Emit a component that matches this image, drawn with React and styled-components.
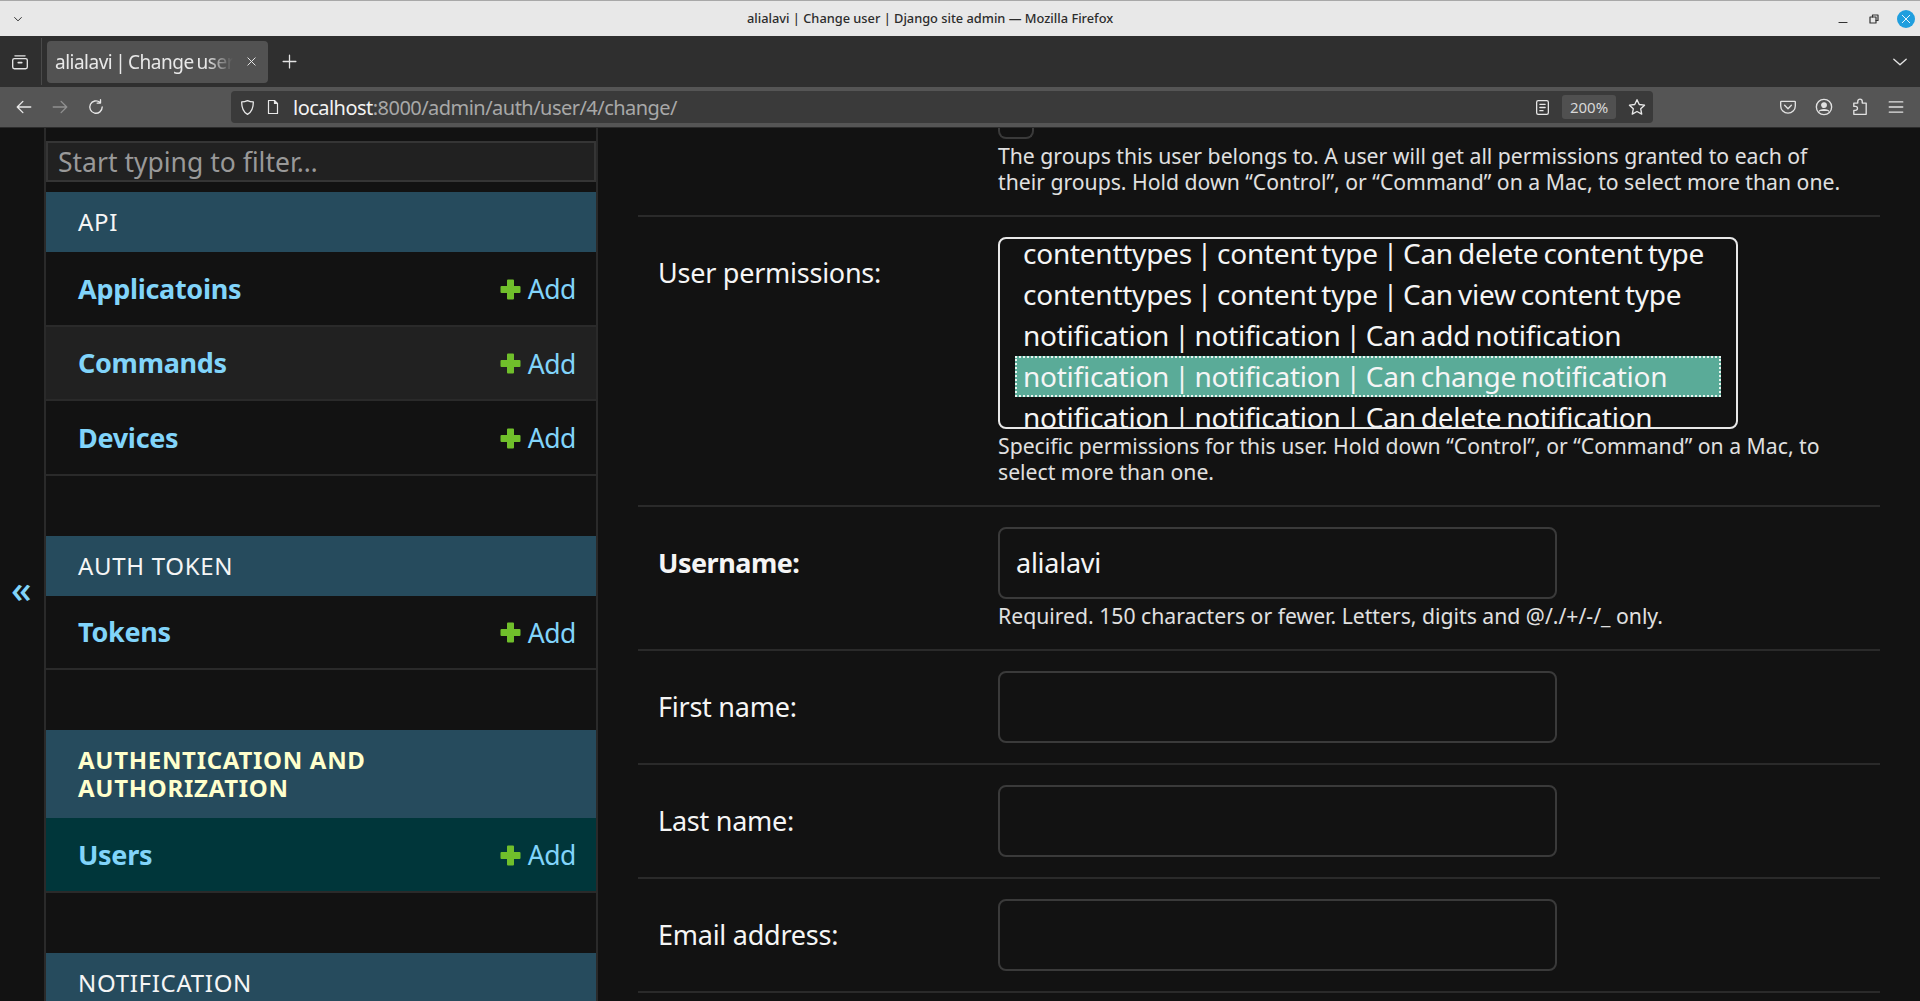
import React from "react";
import styled, { createGlobalStyle } from "styled-components";

const GlobalStyle = createGlobalStyle`
  html, body {
    margin: 0;
    height: 100%;
    overflow: hidden;
    background: #121212;
  }
  body {
    font-family: "Noto Sans", "Open Sans", sans-serif;
  }
  * {
    box-sizing: border-box;
  }
`;

const Page = styled.div`
  height: 1001px;
  display: flex;
  flex-direction: column;
  overflow: hidden;
`;

/* browser chrome */
const TitleBar = styled.div`
  height: 36px;
  flex: none;
  display: grid;
  grid-template-columns: 735px auto 1fr;
  align-items: center;
  background: #e8e8e8;
  border-top: 1px solid #a8a8a8;
  color: #2c2c2c;
  padding: 0 5px 0 12px;
`;

const WindowTitle = styled.div`
  font-size: 12.8px;
  font-weight: 500;
  padding-bottom: 1px;
`;

const WindowButtons = styled.div`
  display: flex;
  justify-content: flex-end;
  align-items: center;
  gap: 15px;
  color: #333;
`;

const CloseCircle = styled.div`
  width: 18px;
  height: 18px;
  border-radius: 50%;
  background: #1f9ede;
  color: #fff;
  display: flex;
  align-items: center;
  justify-content: center;
`;

const TabBar = styled.div`
  height: 51px;
  flex: none;
  display: flex;
  align-items: center;
  background: #2f2f2f;
  color: #e4e4e4;
  padding: 0 11px 0 11px;
`;

const ViewButton = styled.div`
  width: 31px;
  height: 47px;
  display: flex;
  align-items: center;
  border-right: 1px solid #4a4a4a;
`;

const Tab = styled.div`
  width: 221px;
  height: 42px;
  margin-left: 5px;
  border-radius: 4px;
  background: #525252;
  display: flex;
  align-items: center;
  justify-content: space-between;
  padding: 0 10px 0 8px;
  font-size: 19px;
  color: #e8e8e8;
`;

const TabTitle = styled.span`
  width: 178px;
  overflow: hidden;
  white-space: nowrap;
  letter-spacing: -0.5px;
  word-spacing: -1.5px;
  mask-image: linear-gradient(to right, #000 85%, transparent);
`;

const NewTab = styled.div`
  margin-left: 13px;
  display: flex;
  flex: 1;
`;

const NavBar = styled.div`
  height: 41px;
  flex: none;
  display: flex;
  align-items: center;
  background: #555;
  border-bottom: 1px solid #2c2c2c;
  color: #e8e8e8;
  padding: 0 15px 0 15px;
`;

const NavButtons = styled.div`
  display: flex;
  gap: 18px;
  width: 216px;
`;

const UrlBar = styled.div`
  width: 1422px;
  height: 32px;
  border-radius: 4px;
  background: #3a3a3a;
  display: flex;
  align-items: center;
  padding: 0 7px 0 8px;
  gap: 9px;
`;

const UrlText = styled.div`
  flex: 1;
  font-size: 20px;
  color: #a8a8a8;
  letter-spacing: -0.53px;
  margin-left: 3px;
`;

const UrlHost = styled.span`
  color: #f2f2f2;
`;

const ZoomPill = styled.div`
  width: 54px;
  height: 24px;
  border-radius: 3px;
  background: #505050;
  color: #d8d8d8;
  font-size: 15px;
  display: flex;
  align-items: center;
  justify-content: center;
  margin: 0 3px 0 2px;
`;

const NavTools = styled.div`
  flex: 1;
  display: flex;
  justify-content: flex-end;
  align-items: center;
  gap: 18px;
  color: #e2e2e2;
`;

/* admin page */
const Body = styled.div`
  flex: 1;
  min-height: 0;
  display: flex;
  background: #121212;
`;

const ToggleColumn = styled.div`
  width: 46px;
  flex: none;
  display: flex;
  align-items: center;
  padding-left: 11px;
  padding-top: 46px;
  border-right: 2px solid #2a2a2a;
  color: #81d4fa;
  font-size: 38px;
  font-weight: 500;
  line-height: 1;
`;

const Sidebar = styled.nav`
  width: 552px;
  flex: none;
  padding-top: 13px;
  border-right: 2px solid #2a2a2a;
  overflow: hidden;
`;

const Filter = styled.div`
  height: 41px;
  margin-bottom: 10px;
  background: #212121;
  border: 2px solid #353535;
  color: #999;
  font-size: 26.5px;
  line-height: 38px;
  padding-left: 10px;
`;

const Section = styled.section`
  margin-bottom: 60px;
`;

const Caption = styled.div`
  background: #264b5d;
  padding: 16px 32px;
  font-size: 24px;
  line-height: 28px;
  letter-spacing: 0.7px;
  color: ${(p) => (p.$current ? "#ffffcc" : "#f5f5f5")};
  font-weight: ${(p) => (p.$current ? 700 : 400)};
`;

const ModelRow = styled.div`
  height: 74.5px;
  display: flex;
  align-items: center;
  justify-content: space-between;
  padding: 0 20px 0 32px;
  border-bottom: 2px solid #2a2a2a;
  background: ${(p) => (p.$current ? "#00363a" : p.$hover ? "#212121" : "transparent")};
  color: #81d4fa;
`;

const ModelName = styled.span`
  font-size: 27px;
  font-weight: 700;
  letter-spacing: -0.3px;
`;

const AddLink = styled.span`
  display: flex;
  align-items: center;
  gap: 7px;
  font-size: 26.5px;
  line-height: 36px;
  padding-top: 2px;
  letter-spacing: -0.4px;
`;

const Main = styled.main`
  width: 1242px;
  margin-left: 40px;
  flex: none;
`;

const FormRow = styled.div`
  display: flex;
  padding: ${(p) => (p.$scrolled ? 0 : 20)}px 0 20px 20px;
  border-bottom: 2px solid #2a2a2a;
`;

const FieldLabel = styled.label`
  width: 340px;
  flex: none;
  font-size: 27px;
  line-height: 72px;
  color: #f5f5f5;
  font-weight: ${(p) => (p.$required ? 700 : 400)};
  letter-spacing: ${(p) => (p.$required ? -0.5 : -0.25)}px;
`;

const Field = styled.div`
  flex: 1;
  min-width: 0;
`;

const GroupsStub = styled.div`
  width: 36px;
  height: 11px;
  border: 2px solid #3a3a3a;
  border-top: none;
  border-radius: 0 0 8px 8px;
`;

const Help = styled.div`
  margin-top: 4px;
  font-size: 21.2px;
  line-height: 26px;
  color: #e0e0e0;
  width: 860px;
`;

const MultiSelect = styled.div`
  width: 740px;
  height: 192px;
  border: 2px solid #e8e8e8;
  border-radius: 8px;
  padding: 0 15px;
  overflow: hidden;
`;

const OptionList = styled.div`
  margin-top: -6px;
`;

const Option = styled.div`
  height: 41px;
  font-size: 28px;
  letter-spacing: -0.25px;
  word-spacing: -2px;
  white-space: nowrap;
  color: #f5f5f5;
  background: ${(p) => (p.$selected ? "#5aab98" : "transparent")};
  border: ${(p) => (p.$selected ? "2px dotted #e8f4f0" : "none")};
  padding-left: ${(p) => (p.$selected ? 6 : 8)}px;
  line-height: ${(p) => (p.$selected ? 36 : 40)}px;
`;

const TextInput = styled.div`
  width: 559px;
  height: 72px;
  border: 2px solid #3a3a3a;
  border-radius: 8px;
  padding-left: 16px;
  font-size: 27px;
  line-height: 68px;
  color: #f5f5f5;
  letter-spacing: -0.25px;
`;

const Icon = ({ size = 18, children, ...rest }) => (
  <svg width={size} height={size} viewBox="0 0 16 16" fill="none" stroke="currentColor" strokeWidth="1.2" strokeLinecap="round" strokeLinejoin="round" {...rest}>
    {children}
  </svg>
);

const PlusIcon = () => (
  <svg width="21" height="21" viewBox="0 0 21 21" fill="#70bf2b">
    <path d="M7 1.500a1 1 0 0 1 1-1h5a1 1 0 0 1 1 1V7h5.500a1 1 0 0 1 1 1v5a1 1 0 0 1-1 1H14v5.500a1 1 0 0 1-1 1H8a1 1 0 0 1-1-1V14H1.500a1 1 0 0 1-1-1V8a1 1 0 0 1 1-1H7z" />
  </svg>
);

const AppRow = ({ name, current, hover }) => (
  <ModelRow $current={current} $hover={hover}>
    <ModelName>{name}</ModelName>
    <AddLink>
      <PlusIcon />
      Add
    </AddLink>
  </ModelRow>
);

const options = [
  "contenttypes | content type | Can delete content type",
  "contenttypes | content type | Can view content type",
  "notification | notification | Can add notification",
  "notification | notification | Can change notification",
  "notification | notification | Can delete notification",
];

const App = () => (
  <Page>
    <GlobalStyle />
    <TitleBar>
      <Icon size={12} strokeWidth="1.3">
        <path d="M3.500 6l4.500 4.500L12.500 6" />
      </Icon>
      <WindowTitle>alialavi | Change user | Django site admin — Mozilla Firefox</WindowTitle>
      <WindowButtons>
        <Icon size={16}>
          <path d="M4 11.500h8" />
        </Icon>
        <Icon size={16}>
          <rect x="4" y="6" width="6" height="6" />
          <path d="M6.500 6V4H12v5.500h-2" />
        </Icon>
        <CloseCircle>
          <Icon size={12}>
            <path d="M3 3l10 10M13 3L3 13" />
          </Icon>
        </CloseCircle>
      </WindowButtons>
    </TitleBar>

    <TabBar>
      <ViewButton>
        <Icon size={18}>
          <path d="M3.500 2.500h9" />
          <rect x="1.500" y="5" width="13" height="9" rx="1.500" />
          <path d="M6.500 8.500h3" strokeWidth="1.600" />
        </Icon>
      </ViewButton>
      <Tab>
        <TabTitle>alialavi | Change user | Django site admin</TabTitle>
        <Icon size={13}>
          <path d="M3.500 3.500l9 9M12.500 3.500l-9 9" />
        </Icon>
      </Tab>
      <NewTab>
        <Icon size={17}>
          <path d="M8 2v12M2 8h12" />
        </Icon>
      </NewTab>
      <Icon size={18}>
        <path d="M2.500 5.500L8 10.500l5.500-5" />
      </Icon>
    </TabBar>

    <NavBar>
      <NavButtons>
        <Icon>
          <path d="M14 8H2.500M7 3L2 8l5 5" />
        </Icon>
        <Icon style={{ opacity: 0.4 }}>
          <path d="M2 8h11.500M9 3l5 5-5 5" />
        </Icon>
        <Icon>
          <path d="M13.500 8A5.500 5.500 0 1 1 11.500 3.800M12 1.500v3H9" />
        </Icon>
      </NavButtons>
      <UrlBar>
        <Icon size={17}>
          <path d="M8 1.500c2 1 4 1.300 5.500 1.300 0 5.500-1.500 9.500-5.500 11.700C4 12.300 2.500 8.300 2.500 2.800 4 2.800 6 2.500 8 1.500z" />
        </Icon>
        <Icon size={16}>
          <path d="M3.500 1.500h6l3 3v10h-9zM9.500 1.500v3h3" />
        </Icon>
        <UrlText>
          <UrlHost>localhost</UrlHost>:8000/admin/auth/user/4/change/
        </UrlText>
        <Icon size={17}>
          <rect x="2.500" y="1.500" width="11" height="13" rx="1.500" />
          <path d="M5.500 5h5M5.500 8h5M5.500 11h3" />
        </Icon>
        <ZoomPill>200%</ZoomPill>
        <Icon size={18}>
          <path d="M8 1.500l2 4.300 4.700.6-3.400 3.200.9 4.700L8 12l-4.200 2.300.9-4.700L1.300 6.400 6 5.800z" />
        </Icon>
      </UrlBar>
      <NavTools>
        <Icon size={18}>
          <path d="M2 3h12a.5.5 0 0 1 .5.5V7A6.500 6.500 0 0 1 1.500 7V3.500A.5.5 0 0 1 2 3zM5 6.500l3 3 3-3" />
        </Icon>
        <Icon size={18}>
          <circle cx="8" cy="8" r="6.800" />
          <circle cx="8" cy="6.300" r="2" fill="currentColor" />
          <path d="M4 11.500c1.200-1.500 6.800-1.500 8 0" fill="currentColor" />
        </Icon>
        <Icon size={18}>
          <path d="M6 3.500V3a2 2 0 0 1 4 0v1.500h3.500V14.500H2.500V11H4a1.700 1.700 0 0 0 0-3.500H2.500V4.500H6z" />
        </Icon>
        <Icon size={18}>
          <path d="M2 3.500h12M2 8h12M2 12.500h12" />
        </Icon>
      </NavTools>
    </NavBar>

    <Body>
      <ToggleColumn>«</ToggleColumn>
      <Sidebar>
        <Filter>Start typing to filter…</Filter>
        <Section>
          <Caption>API</Caption>
          <AppRow name="Applicatoins" />
          <AppRow name="Commands" hover />
          <AppRow name="Devices" />
        </Section>
        <Section>
          <Caption>AUTH TOKEN</Caption>
          <AppRow name="Tokens" />
        </Section>
        <Section>
          <Caption $current>AUTHENTICATION AND AUTHORIZATION</Caption>
          <AppRow name="Users" current />
        </Section>
        <Section>
          <Caption>NOTIFICATION</Caption>
        </Section>
      </Sidebar>
      <Main>
        <FormRow $scrolled>
          <FieldLabel />
          <Field>
            <GroupsStub />
            <Help>
              The groups this user belongs to. A user will get all permissions granted to each of their groups. Hold down “Control”, or “Command” on a Mac, to select more than one.
            </Help>
          </Field>
        </FormRow>
        <FormRow>
          <FieldLabel>User permissions:</FieldLabel>
          <Field>
            <MultiSelect>
              <OptionList>
                {options.map((text, i) => (
                  <Option key={text} $selected={i === 3}>
                    {text}
                  </Option>
                ))}
              </OptionList>
            </MultiSelect>
            <Help>Specific permissions for this user. Hold down “Control”, or “Command” on a Mac, to select more than one.</Help>
          </Field>
        </FormRow>
        <FormRow>
          <FieldLabel $required>Username:</FieldLabel>
          <Field>
            <TextInput>alialavi</TextInput>
            <Help>Required. 150 characters or fewer. Letters, digits and @/./+/-/_ only.</Help>
          </Field>
        </FormRow>
        <FormRow>
          <FieldLabel>First name:</FieldLabel>
          <Field>
            <TextInput />
          </Field>
        </FormRow>
        <FormRow>
          <FieldLabel>Last name:</FieldLabel>
          <Field>
            <TextInput />
          </Field>
        </FormRow>
        <FormRow>
          <FieldLabel>Email address:</FieldLabel>
          <Field>
            <TextInput />
          </Field>
        </FormRow>
      </Main>
    </Body>
  </Page>
);

export default App;
